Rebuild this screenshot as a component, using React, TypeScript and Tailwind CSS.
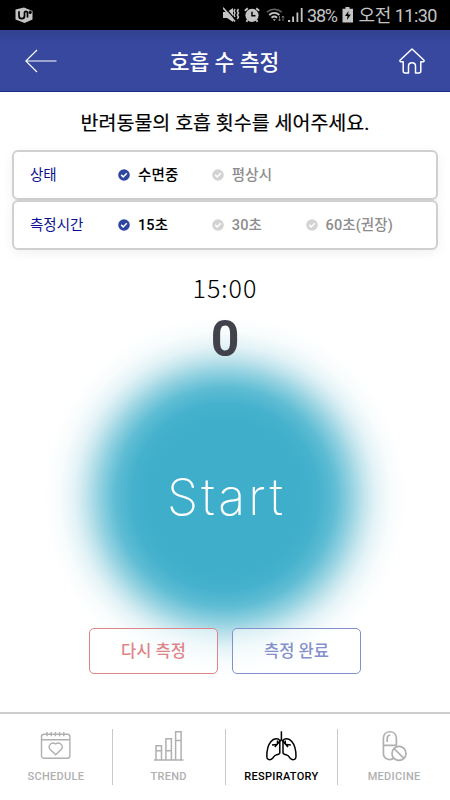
import React, { useState } from "react";
import clsx from "clsx";

const STATES = ["수면중", "평상시"];
const DURATIONS = ["15초", "30초", "60초(권장)"];

const StatusBar: React.FC = () => (
  <div className="flex h-[30px] items-center justify-between bg-black pl-[15px] pr-[13px] text-[#c4c4c4]">
    <svg width="19" height="17" viewBox="0 0 19 17">
      <path d="M0.5 2.5L9 .5l8.5 3.5v8.500L9.500 16 .5 12.500z" fill="#c4c4c4" />
      <path d="M4 4.200v4.500c0 4 5.500 4 5.500 0V5.500c0-1.500 3-1.500 3 .5v4.500M15.200 3.800v3.200M13.600 5.400h3.200" fill="none" stroke="#000" strokeWidth="1.700" />
    </svg>
    <div className="flex items-center">
      {/* 진동 */}
      <svg width="17" height="16" viewBox="0 0 17 16" fill="#c4c4c4">
        <path d="M0 5h4l6-4v14L4 11H0z" />
        <path d="M1.500 0l12 14" stroke="#000" strokeWidth="1.200" />
        <path d="M0 .8l12 13.700" stroke="#c4c4c4" strokeWidth="1.600" />
        <path d="M12 2l-1 2 1 2-1 2 1 2M15.500 2l-1.200 2 1.200 2-1.200 2 1.200 2-1.200 2" fill="none" stroke="#c4c4c4" strokeWidth="1.500" />
      </svg>
      {/* 알람 */}
      <svg className="ml-[4px]" width="16" height="16" viewBox="0 0 16 16" fill="none" stroke="#c4c4c4">
        <circle cx="8" cy="8.300" r="6.600" fill="#c4c4c4" stroke="none" />
        <path d="M8 4.800v4h3.500" stroke="#000" strokeWidth="1.500" />
        <path d="M.8 3.800L3.800 1.200M12.200 1.200L15.200 3.800M3.500 13l-1 1.800M12.500 13l1 1.800" strokeWidth="1.800" />
      </svg>
      {/* 와이파이 */}
      <svg className="ml-[6px]" width="19" height="16" viewBox="0 0 19 16" fill="none" stroke="#c4c4c4">
        <path d="M.8 5.200c4.500-4 10.500-4 15 0" stroke="#666" strokeWidth="1.500" />
        <path d="M3.200 8c3-2.700 7.200-2.700 10.200 0M5.500 10.700c1.800-1.500 3.800-1.500 5.600 0" strokeWidth="1.800" />
        <path d="M6.800 12.200h3l-1.500 1.800z" fill="#c4c4c4" stroke="none" />
        <path d="M13.500 9v5M12.300 12.500l1.200 1.500 1.200-1.500M17 14V9M15.800 10.500L17 9l1.200 1.500" stroke="#888" strokeWidth=".8" />
      </svg>
      {/* 신호 */}
      <svg className="ml-[3px]" width="16" height="16" viewBox="0 0 16 16" fill="#c4c4c4">
        <path d="M0 13h2.200v2H0zM4.200 9.500h1.800V15h-1.800zM8.500 5.500h1.800V15h-1.800zM12.800 1h1.800v14h-1.800z" />
      </svg>
      <span className="ml-[3px] w-[32px] whitespace-nowrap text-[18px] tracking-[-1.200px]">38%</span>
      <svg className="ml-[3px]" width="12" height="16" viewBox="0 0 12 16">
        <path d="M3.500 0h4v1.800H11V15.500H.5V1.800h3z" fill="#c4c4c4" />
        <path d="M6.500 4L3 9h2.500L5 13l3.800-5.500H6.200z" fill="#000" />
      </svg>
      <span className="ml-[4px] w-[79px] whitespace-nowrap pt-px text-right text-[18px] tracking-[-0.500px]">오전 11:30</span>
    </div>
  </div>
);

const Header: React.FC = () => (
  <header className="flex h-[62px] items-center justify-between border-b border-[#172d88] bg-[#38489f] bg-linear-to-b from-[#314090] to-[#38489f] to-25% px-[25px] text-white">
    <svg width="32" height="24" viewBox="0 0 32 24" fill="none" stroke="currentColor" strokeWidth="1.200">
      <path d="M12 1L.8 12 12 23M.8 12H31.500" />
    </svg>
    <h1 className="pr-[7px] pt-[4px] text-[21.500px] font-medium leading-[30px]">호흡 수 측정</h1>
    <svg width="26" height="26" viewBox="0 0 26 26" fill="none" stroke="currentColor" strokeWidth="1.500" strokeLinejoin="round">
      <path d="M13 1L1 12.200c-.4 1.200.7 2 1.800 1.500h1.400V23c0 1.400.6 2 2 2h3.300v-7c0-4.500 7-4.500 7 0v7h3.300c1.400 0 2-.6 2-2v-9.300h1.400c1.100.5 2.200-.3 1.800-1.500z" />
    </svg>
  </header>
);

interface OptionRowProps {
  label: string;
  options: string[];
  selected: number;
  onSelect: (index: number) => void;
}

const OptionRow: React.FC<OptionRowProps> = ({ label, options, selected, onSelect }) => (
  <div className="flex h-[50px] items-center rounded-[6px] border-2 border-[#d0d0d0] bg-white pl-[16px] text-[14.500px] shadow-[0_3px_12px_rgba(0,0,0,0.06)]">
    <span className="w-[88px] pt-[2px] text-[#0b1192]">{label}</span>
    {options.map((option, i) => (
      <button
        key={option}
        onClick={() => onSelect(i)}
        className={clsx(
          "flex w-[93.800px] items-center gap-[8px] whitespace-nowrap font-medium",
          i === selected ? "text-black" : "text-[#8d8d8d]"
        )}
      >
        <svg className="shrink-0" width="12" height="12" viewBox="0 0 12 12">
          <circle cx="6" cy="6" r="5.800" fill={i === selected ? "#30459f" : "#d3d3d3"} />
          <path d="M3.200 5.900l2 2 3.600-3.700" fill="none" stroke="#fff" strokeWidth="1.500" />
        </svg>
        <span className="pt-[2px] tracking-[0.100px]">{option}</span>
      </button>
    ))}
  </div>
);

const ScheduleIcon = () => (
  <svg width="32" height="32" viewBox="0 0 32 32" fill="none" stroke="currentColor" strokeWidth="1.400">
    <rect x="1.500" y="4.300" width="28.400" height="23.900" rx="2.500" />
    <path d="M1.500 9.700h28.400M7 2v4.200M11.200 2v4.200M15.400 2v4.200M19.600 2v4.200M23.800 2v4.200" />
    <path d="M15.700 24.800l-5.400-5.200c-3-3.500.8-8.500 5.400-5.700 4.600-2.800 8.400 2.200 5.400 5.700z" />
  </svg>
);

const TrendIcon = () => (
  <svg width="32" height="32" viewBox="0 0 32 32" fill="none" stroke="currentColor" strokeWidth="1.500">
    <path d="M1 30h29.500M3 30V15.800h5.500V30M12.900 30V8.800h5.500V30M22.600 30V1.800h5.500V30M3 20.800h5.500M12.900 20.800h5.500M22.600 10.500h5.500" />
  </svg>
);

const LungsIcon = () => (
  <svg width="32" height="32" viewBox="0 0 32 32" fill="none" stroke="currentColor" strokeWidth="1.500" strokeLinejoin="round">
    <path d="M16.400 1.200v8.800M16.400 9.500l-6.600 7.500M16.400 9.500l6.600 7.500M7 15l4.500-.5M21.300 14.500l4.500.5M12.500 10.500v3.300M20.300 10.500v3.300" />
    <path d="M14.800 23.500V10.500C13.500 8 9 8 6 11.500 2.500 15.500 1.800 21 1.800 26.500c0 3 2.700 3.800 4.700 2.600 2.500-1.400 2-3.200 4.300-4 2.800-1 4-.3 4-2.600" />
    <path d="M18 23.500V10.500c1.300-2.500 5.800-2.500 8.800 1 3.500 4 4.200 9.500 4.200 15 0 3-2.700 3.800-4.700 2.600-2.500-1.400-2-3.200-4.300-4-2.800-1-4-.3-4-2.600" />
  </svg>
);

const MedicineIcon = () => (
  <svg width="32" height="32" viewBox="0 0 32 32" fill="none" stroke="currentColor" strokeWidth="1.700">
    <path d="M16 28c-4 3.300-10.600.8-10.600-4.500V8.200c0-8.600 13-8.600 13 0v7.500M5.400 15.300h13M9.200 12V8.500c0-2 1-3.200 3-3.500" />
    <circle cx="21" cy="23.400" r="7" />
    <path d="M16 18.500l10 9.800" />
  </svg>
);

const TABS = [
  { label: "SCHEDULE", icon: <ScheduleIcon /> },
  { label: "TREND", icon: <TrendIcon /> },
  { label: "RESPIRATORY", icon: <LungsIcon /> },
  { label: "MEDICINE", icon: <MedicineIcon /> },
];

const App: React.FC = () => {
  const [state, setState] = useState(0);
  const [duration, setDuration] = useState(0);
  const [count, setCount] = useState(0);

  return (
    <div className="flex h-[800px] w-[450px] flex-col overflow-hidden bg-white font-[Roboto,'Noto_Sans_CJK_KR',sans-serif]">
      <StatusBar />
      <Header />

      <main className="flex flex-1 flex-col bg-[radial-gradient(circle_at_225px_405px,#3eaecb_0px,#3eaecb_74px,#45b1cd_93px,#5fbdd4_110px,#94d2e1_126px,#c3e5ed_139px,#e4f3f7_151px,#f8fcfd_166px,#ffffff_182px)]">
        <p className="mt-[17px] text-center text-[19.500px] leading-[30px] text-black [-webkit-text-stroke:0.2px_black]">
          반려동물의 호흡 횟수를 세어주세요.
        </p>

        <div className="mx-[12px] mt-[11px]">
          <OptionRow label="상태" options={STATES} selected={state} onSelect={setState} />
          <OptionRow label="측정시간" options={DURATIONS} selected={duration} onSelect={setDuration} />
        </div>

        <div className="mt-[22px] text-center font-['Noto_Sans_CJK_KR',sans-serif] text-[25px] font-light leading-[30px] tracking-[1px] text-black">15:00</div>
        <div className="mt-[12px] text-center text-[50px] font-bold leading-[50px] text-[#42424c]">{count}</div>

        <button
          onClick={() => setCount((c) => c + 1)}
          className="mx-auto mt-[103px] h-[60px] pl-[3px] font-[Inter,sans-serif] text-[50px] font-extralight leading-[60px] tracking-[3.200px] text-white"
        >
          Start
        </button>

        <div className="mt-[101px] flex justify-center gap-[14px] text-[16.500px] font-medium">
          <button
            onClick={() => setCount(0)}
            className="h-[46px] w-[129px] rounded-[5px] border border-[#dd8589] bg-white/50 pt-[3px] text-[#dd8589]"
          >
            다시 측정
          </button>
          <button className="h-[46px] w-[129px] rounded-[5px] border border-[#8490ca] bg-white/50 pt-[3px] text-[#8490ca]">
            측정 완료
          </button>
        </div>
      </main>

      <nav className="flex h-[88px] border-t-2 border-[#cdcdcd] pt-[15px]">
        {TABS.map((tab, i) => (
          <button
            key={tab.label}
            className={clsx(
              "flex h-[56px] flex-1 flex-col items-center border-[#c8c8c8] pt-px",
              i < TABS.length - 1 && "border-r",
              i === 2 ? "text-black" : "text-[#b0b0b0]"
            )}
          >
            {tab.icon}
            <span className="mt-[8px] text-[11px] font-medium leading-[14px] tracking-[0.300px]">{tab.label}</span>
          </button>
        ))}
      </nav>
    </div>
  );
};

export default App;
